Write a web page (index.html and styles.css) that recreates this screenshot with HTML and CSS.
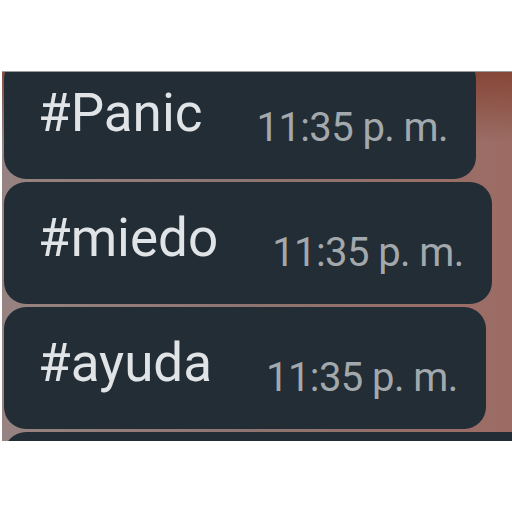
FILE: index.html
```html
<!DOCTYPE html>
<html lang="es">
<head>
<meta charset="utf-8">
<link rel="stylesheet" href="styles.css">
</head>
<body>
<div class="photo">
  <div class="list">
    <div class="bubble first"><span class="name">#Panic</span><span class="time">11:35 p. m.</span></div>
    <div class="bubble"><span class="name">#miedo</span><span class="time">11:35 p. m.</span></div>
    <div class="bubble"><span class="name">#ayuda</span><span class="time">11:35 p. m.</span></div>
    <div class="bubble last"></div>
  </div>
</div>
</body>
</html>
```
FILE: styles.css
```css
html, body {
  margin: 0;
  padding: 0;
  background: #ffffff;
}
body {
  width: 512px;
  height: 512px;
  overflow: hidden;
  font-family: Roboto, "Noto Sans", sans-serif;
}
.photo {
  margin-top: 71px;
  margin-left: 2px;
  height: 369px;
  border-top: 1px solid #9a9a9a;
  overflow: hidden;
  background:
    linear-gradient(180deg, rgba(120,45,25,0.6) 0px, rgba(120,45,25,0) 70px),
    linear-gradient(90deg, #978381 0%, #8e7470 50%, #9c6c64 100%);
}
.list {
  display: flex;
  flex-direction: column;
  align-items: flex-start;
  gap: 3px;
  padding-left: 2px;
  margin-top: -15px;
}
.bubble {
  box-sizing: border-box;
  height: 122px;
  display: flex;
  align-items: flex-start;
  gap: 54px;
  padding: 30px 28px 0 34px;
  background: #222d36;
  border-radius: 22px;
}
.name {
  font-size: 53px;
  line-height: 1;
  color: #e1e4e6;
}
.time {
  margin-top: 21px;
  font-size: 40px;
  line-height: 1;
  letter-spacing: -0.6px;
  color: #a3a8ac;
}
.bubble.last {
  width: 540px;
}
```
